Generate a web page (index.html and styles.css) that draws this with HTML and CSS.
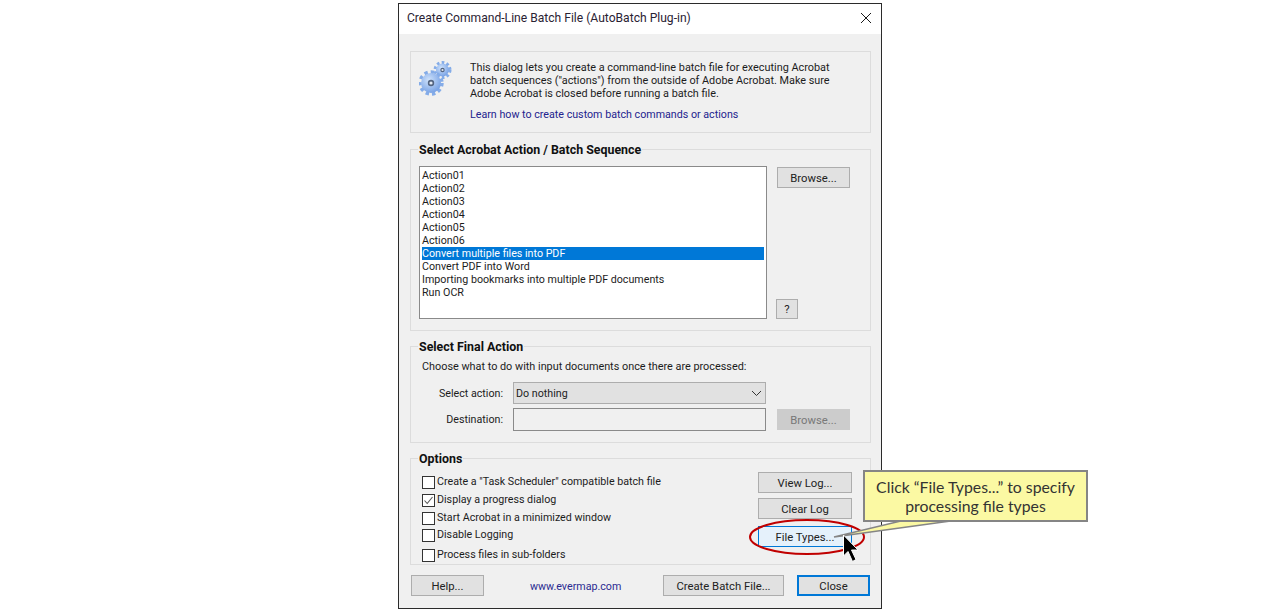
FILE: index.html
```html
<!DOCTYPE html>
<html lang="en">
<head>
<meta charset="utf-8">
<title>Create Command-Line Batch File</title>
<link rel="stylesheet" href="styles.css">
</head>
<body>
<main class="page">
  <section class="dialog">
    <header class="titlebar">
      <span class="title">Create Command-Line Batch File (AutoBatch Plug-in)</span>
      <svg class="close-x" width="12" height="12" viewBox="0 0 12 12"><path d="M1 1 11 11M11 1 1 11" stroke="#1a1a1a" stroke-width="1" fill="none"/></svg>
    </header>
    <div class="content">
      <div class="intro">
        <svg class="gears" width="36" height="36" viewBox="0 0 36 36">
          <defs>
            <radialGradient id="gearFill" cx="40%" cy="35%" r="75%">
              <stop offset="0" stop-color="#cfe2fb"/>
              <stop offset="1" stop-color="#6d9ae2"/>
            </radialGradient>
          </defs>
          <circle cx="23.5" cy="9" r="7.5" fill="none" stroke="#84ace8" stroke-width="3" stroke-dasharray="2.6 2.3"/>
          <circle cx="23.5" cy="9" r="6.5" fill="url(#gearFill)"/>
          <circle cx="23.5" cy="9" r="2.2" fill="#52637f"/>
          <circle cx="23.5" cy="9" r="1.1" fill="#dfe6f0"/>
          <circle cx="12" cy="22" r="11" fill="none" stroke="#84ace8" stroke-width="3.4" stroke-dasharray="3.4 3"/>
          <circle cx="12" cy="22" r="10" fill="url(#gearFill)"/>
          <circle cx="12" cy="22" r="3.2" fill="#52637f"/>
          <circle cx="12" cy="22" r="1.6" fill="#e4eaf3"/>
        </svg>
        <div class="intro-text">
          <p class="intro-par">This dialog lets you create a command-line batch file for executing Acrobat<br>batch sequences ("actions") from the outside of Adobe Acrobat. Make sure<br>Adobe Acrobat is closed before running a batch file.</p>
          <p class="link">Learn how to create custom batch commands or actions</p>
        </div>
      </div>

      <fieldset class="group group-seq">
        <legend>Select Acrobat Action / Batch Sequence</legend>
        <div class="seq-row">
          <ul class="listbox">
            <li>Action01</li>
            <li>Action02</li>
            <li>Action03</li>
            <li>Action04</li>
            <li>Action05</li>
            <li>Action06</li>
            <li class="selected">Convert multiple files into PDF</li>
            <li>Convert PDF into Word</li>
            <li>Importing bookmarks into multiple PDF documents</li>
            <li>Run OCR</li>
          </ul>
          <div class="seq-side">
            <button class="btn btn-browse">Browse...</button>
            <button class="btn btn-q">?</button>
          </div>
        </div>
      </fieldset>

      <fieldset class="group group-final">
        <legend>Select Final Action</legend>
        <p class="choose">Choose what to do with input documents once there are processed:</p>
        <div class="form-row row-select">
          <span class="label">Select action:</span>
          <div class="select">
            <span>Do nothing</span>
            <svg width="11" height="7" viewBox="0 0 11 7"><path d="M1 1 5.5 5.5 10 1" fill="none" stroke="#333" stroke-width="1"/></svg>
          </div>
        </div>
        <div class="form-row row-dest">
          <span class="label">Destination:</span>
          <div class="textbox"></div>
          <button class="btn btn-browse disabled">Browse...</button>
        </div>
      </fieldset>

      <fieldset class="group group-options">
        <legend>Options</legend>
        <div class="options-row">
          <div class="checks">
            <label class="check c1"><span class="box"></span>Create a "Task Scheduler" compatible batch file</label>
            <label class="check c2"><span class="box"><svg width="11" height="11" viewBox="0 0 11 11"><path d="M1.5 5.5 4.2 8.5 9.5 2" fill="none" stroke="#555" stroke-width="1.1"/></svg></span>Display a progress dialog</label>
            <label class="check c3"><span class="box"></span>Start Acrobat in a minimized window</label>
            <label class="check c4"><span class="box"></span>Disable Logging</label>
            <label class="check c5"><span class="box"></span>Process files in sub-folders</label>
          </div>
          <div class="option-btns">
            <button class="btn btn-opt">View Log...</button>
            <button class="btn btn-opt">Clear Log</button>
            <button class="btn btn-opt hot">File Types...</button>
          </div>
        </div>
      </fieldset>

      <footer class="footer">
        <button class="btn btn-help">Help...</button>
        <span class="site">www.evermap.com</span>
        <button class="btn btn-create">Create Batch File...</button>
        <button class="btn btn-close">Close</button>
      </footer>
    </div>
  </section>

  <svg class="annot" width="1280" height="613" viewBox="0 0 1280 613">
    <ellipse cx="807" cy="537" rx="57" ry="17" fill="none" stroke="#c00000" stroke-width="2"/>
    <path d="M834 537 905 520 958 520Z" fill="#fbf9a3" stroke="#858585" stroke-width="1.5"/>
    <path d="M843.5 535V556L848 551.5 852.5 561.5 856 559.5 851.5 550H858Z" fill="#000" stroke="#fff" stroke-width="1"/>
  </svg>
  <div class="callout">Click “File Types...” to specify<br>processing file types</div>
</main>
</body>
</html>
```

FILE: styles.css
```css
* { box-sizing: border-box; }
html, body { margin: 0; padding: 0; background: #fff; }
body { font-family: "Roboto", "Open Sans", sans-serif; font-size: 10.7px; color: #1c1c1c; }
p { margin: 0; }

.page { position: relative; width: 1280px; height: 613px; overflow: hidden; padding: 3px 0 0 398px; }

.dialog { width: 484px; height: 606px; border: 1px solid #2b2b2b; background: #f0f0f0; display: flex; flex-direction: column; }

.titlebar { height: 30px; flex: none; background: #fff; display: flex; align-items: center; justify-content: space-between; padding: 0 9px 2px 8px; }
.title { font-size: 12.1px; color: #2a2233; }

.content { flex: 1; padding: 17px 10px 0 11px; display: flex; flex-direction: column; }

.intro { height: 82px; border: 1px solid #dcdcdc; display: flex; padding: 9px 0 0 8px; flex: none; }
.gears { flex: none; margin-right: 15px; }
.intro-text { line-height: 13px; }
.intro-par { white-space: nowrap; font-size: 10.85px; }
.link { color: #23238e; margin-top: 8px; }

.group { border: 1px solid #dcdcdc; margin: 0; padding: 0 8px; flex: none; min-width: 0; }
.group legend { font-weight: 700; padding: 2px 1px 0; margin-left: -1px; line-height: 14px; color: #111; font-size: 12.4px; }

.group-seq { height: 190px; margin-top: 8px; }
.seq-row { display: flex; margin-top: 9px; }
.listbox { list-style: none; margin: 0; padding: 2px 2px 0; width: 348px; height: 153px; border: 1px solid #8a8a8a; background: #fff; flex: none; line-height: 13px; }
.listbox li { height: 13px; }
.listbox .selected { background: #0078d7; color: #fff; }
.seq-side { display: flex; flex-direction: column; align-items: flex-start; margin-left: 9px; justify-content: space-between; }

.btn { font-family: inherit; font-size: 11.3px; color: #222; background: #e1e1e1; border: 1px solid #adadad; padding: 1px 0 0; display: flex; align-items: center; justify-content: center; flex: none; }
.btn-browse { width: 73px; height: 21px; margin-left: 1px; margin-top: 1px; }
.btn-q { width: 22px; height: 20px; }
.disabled { background: #cccccc; border-color: #cccccc; color: #787878; }

.group-final { height: 105px; margin-top: 7px; }
.choose { margin: 6px 0 0 3px; line-height: 14px; font-size: 10.85px; }
.form-row { display: flex; align-items: center; }
.label { width: 84px; text-align: right; flex: none; margin-right: 10px; }
.row-select { margin-top: 8px; }
.select { width: 253px; height: 22px; background: #e1e1e1; border: 1px solid #adadad; display: flex; align-items: center; justify-content: space-between; padding: 0 3px 0 2px; }
.row-dest { margin-top: 4px; }
.textbox { width: 253px; height: 23px; background: #f0f0f0; border: 1px solid #8a8a8a; }
.row-dest .btn-browse { margin-left: 11px; margin-top: 0; }

.group-options { height: 115px; margin-top: 7px; }
.options-row { display: flex; justify-content: space-between; padding-right: 10px; }
.checks { display: flex; flex-direction: column; padding-left: 3px; padding-top: 9px; }
.check { display: flex; align-items: center; line-height: 14px; height: 14px; }
.c2, .c3 { margin-top: 4px; }
.c4 { margin-top: 3px; }
.c5 { margin-top: 6px; }
.box { width: 13px; height: 13px; border: 1px solid #333; background: #fff; margin-right: 2px; display: flex; }
.box svg { flex: none; }
.option-btns { display: flex; flex-direction: column; margin-top: 6px; gap: 5px; }
.btn-opt { width: 94px; height: 21px; }
.hot { background: #e5f1fb; border-color: #0078d7; margin-top: 2px; }

.footer { display: flex; align-items: flex-start; margin-top: 10px; margin-left: 1px; }
.btn-help { width: 73px; height: 21px; }
.site { color: #2b2b90; margin-left: 46px; margin-top: 5px; width: 133px; }
.btn-create { width: 121px; height: 21px; }
.btn-close { width: 73px; height: 21px; margin-left: 13px; border: 2px solid #0078d7; }

.annot { position: absolute; left: 0; top: 0; }
.callout { position: absolute; left: 863px; top: 470px; width: 225px; height: 52px; background: #fbf9a3; border: 2px solid #858585; font-family: "Lato", "Open Sans", sans-serif; font-size: 15.8px; line-height: 19px; color: #333; text-align: center; padding-top: 5px; }
```
